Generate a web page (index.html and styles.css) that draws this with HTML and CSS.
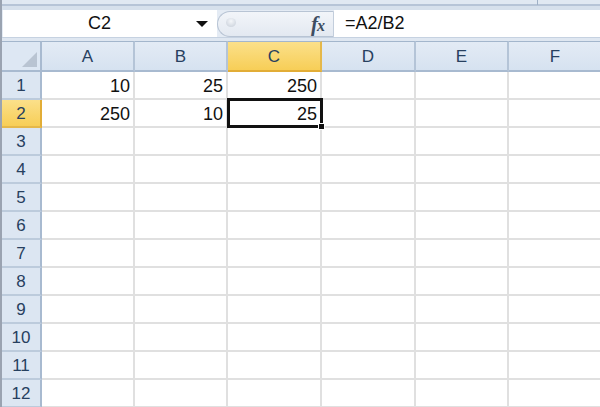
FILE: index.html
```html
<!DOCTYPE html>
<html>
<head>
<meta charset="utf-8">
<link rel="stylesheet" href="styles.css">
</head>
<body>
<div class="app">
  <div class="topbar"><span class="topbar-div"></span></div>
  <div class="formulabar">
    <div class="namebox"><span class="name">C2</span><span class="arrow"></span></div>
    <div class="pill">
      <span class="knob"></span>
      <span class="fx"><i>f</i><i class="x">x</i></span>
    </div>
    <div class="formula">=A2/B2</div>
  </div>
  <div class="strip"></div>
  <div class="grid">
    <div class="corner"><span class="tri"></span></div>
    <div class="ch">A</div><div class="ch">B</div><div class="ch sel">C</div><div class="ch">D</div><div class="ch">E</div><div class="ch">F</div>

    <div class="rh">1</div><div class="c">10</div><div class="c">25</div><div class="c">250</div><div class="c"></div><div class="c"></div><div class="c"></div>
    <div class="rh sel">2</div><div class="c">250</div><div class="c">10</div><div class="c active">25</div><div class="c"></div><div class="c"></div><div class="c"></div>
    <div class="rh">3</div><div class="c"></div><div class="c"></div><div class="c"></div><div class="c"></div><div class="c"></div><div class="c"></div>
    <div class="rh">4</div><div class="c"></div><div class="c"></div><div class="c"></div><div class="c"></div><div class="c"></div><div class="c"></div>
    <div class="rh">5</div><div class="c"></div><div class="c"></div><div class="c"></div><div class="c"></div><div class="c"></div><div class="c"></div>
    <div class="rh">6</div><div class="c"></div><div class="c"></div><div class="c"></div><div class="c"></div><div class="c"></div><div class="c"></div>
    <div class="rh">7</div><div class="c"></div><div class="c"></div><div class="c"></div><div class="c"></div><div class="c"></div><div class="c"></div>
    <div class="rh">8</div><div class="c"></div><div class="c"></div><div class="c"></div><div class="c"></div><div class="c"></div><div class="c"></div>
    <div class="rh">9</div><div class="c"></div><div class="c"></div><div class="c"></div><div class="c"></div><div class="c"></div><div class="c"></div>
    <div class="rh">10</div><div class="c"></div><div class="c"></div><div class="c"></div><div class="c"></div><div class="c"></div><div class="c"></div>
    <div class="rh">11</div><div class="c"></div><div class="c"></div><div class="c"></div><div class="c"></div><div class="c"></div><div class="c"></div>
    <div class="rh">12</div><div class="c"></div><div class="c"></div><div class="c"></div><div class="c"></div><div class="c"></div><div class="c"></div>
  </div>
</div>
</body>
</html>
```

FILE: styles.css
```css
html, body {
  margin: 0;
  padding: 0;
  background: #ffffff;
}
.app {
  width: 600px;
  height: 407px;
  overflow: hidden;
  font-family: "Liberation Sans", Arial, sans-serif;
  color: #111;
  border-left: 2px solid #9aa3b1;
  box-sizing: border-box;
}
.topbar {
  height: 10px;
  box-sizing: border-box;
  background: linear-gradient(#e0e8f2 0, #e0e8f2 4px, #b6c4d7 4px, #b6c4d7 6px, #d6e0ec 6px);
  position: relative;
}
.topbar-div {
  position: absolute;
  left: 535px;
  top: 0;
  width: 1px;
  height: 5px;
  background: #9fb0c6;
}
.formulabar {
  height: 28px;
  display: flex;
  background: #e4ebf4;
  border-bottom: 1px solid #c6d2e1;
  box-sizing: border-box;
}
.namebox {
  width: 214px;
  background: #fff;
  display: flex;
  align-items: center;
  margin-left: 1px;
}
.name {
  flex: 1;
  text-align: center;
  font-size: 18px;
  padding-left: 0;
  color: #111;
}
.arrow {
  width: 0;
  height: 0;
  border-left: 6px solid transparent;
  border-right: 6px solid transparent;
  border-top: 6px solid #111;
  margin-right: 9px;
}
.pill {
  width: 117px;
  display: flex;
  align-items: center;
  justify-content: space-between;
  background: linear-gradient(#f2f5f9, #e3e9f1);
  border: 1px solid #b8c4d4;
  border-right: 1px solid #c3cedc;
  border-radius: 13px 0 0 13px;
  box-sizing: border-box;
  margin-top: 1px;
  height: 26px;
}
.knob {
  width: 10px;
  height: 9px;
  border-radius: 50%;
  background: radial-gradient(circle at 50% 35%, #f5f7fa, #c4ccd7);
  margin-left: 8px;
  margin-top: -4px;
}
.fx {
  font-family: "Liberation Serif", "Times New Roman", serif;
  color: #3d4d62;
  font-size: 21px;
  margin-right: 9px;
  letter-spacing: -1px;
}
.fx i { font-weight: bold; }
.fx .x { font-size: 16px; }
.formula {
  flex: 1;
  background: #fff;
  display: flex;
  align-items: center;
  padding-left: 11px;
  font-size: 18px;
  color: #111;
}
.strip {
  height: 3px;
  background: #dfe7f1;
}
.grid {
  display: grid;
  grid-template-columns: 40px 93px 93px 94px 94px 93px 94px;
  grid-template-rows: 31px repeat(12, 28px);
}
.corner {
  background: #dde7f3;
  border-top: 1px solid #a3b6cc;
  border-right: 2px solid #a8bad0;
  border-bottom: 2px solid #a8bad0;
  box-sizing: border-box;
  position: relative;
}
.tri {
  position: absolute;
  right: 3px;
  bottom: 3px;
  width: 0;
  height: 0;
  border-left: 15px solid transparent;
  border-bottom: 15px solid #b9c4d2;
}
.ch {
  background: linear-gradient(#e3ebf5, #d6e2f0);
  border-top: 1px solid #a3b6cc;
  border-right: 2px solid #b4c4d7;
  border-bottom: 2px solid #a8bad0;
  box-sizing: border-box;
  display: flex;
  align-items: center;
  justify-content: center;
  font-size: 17px;
  color: #27405f;
  padding-top: 2px;
}
.ch.sel {
  background: linear-gradient(#fbe08a, #f7ce57);
  border-right-color: #e5b84a;
  border-bottom-color: #e2ad36;
  color: #27405f;
}
.rh {
  background: #dce6f2;
  border-right: 2px solid #a8bad0;
  border-bottom: 2px solid #bccbdc;
  box-sizing: border-box;
  display: flex;
  align-items: center;
  justify-content: center;
  font-size: 17px;
  color: #27405f;
  padding-top: 2px;
}
.rh.sel {
  background: linear-gradient(#fbe08a, #f7ce57);
  border-right-color: #e2ad36;
  border-bottom-color: #e5b84a;
}
.c {
  border-right: 2px solid #e0e0e0;
  border-bottom: 2px solid #e0e0e0;
  box-sizing: border-box;
  display: flex;
  align-items: center;
  justify-content: flex-end;
  padding-right: 3px;
  padding-top: 2px;
  font-size: 18px;
  color: #111;
}
.c.active {
  position: relative;
  border: 3px solid #111;
  margin: -2px -1px 0 -1px;
  padding-right: 3px;
}
.c.active::after {
  content: "";
  position: absolute;
  right: -5px;
  bottom: -5px;
  width: 5px;
  height: 5px;
  background: #111;
  border: 1px solid #fff;
}
```
